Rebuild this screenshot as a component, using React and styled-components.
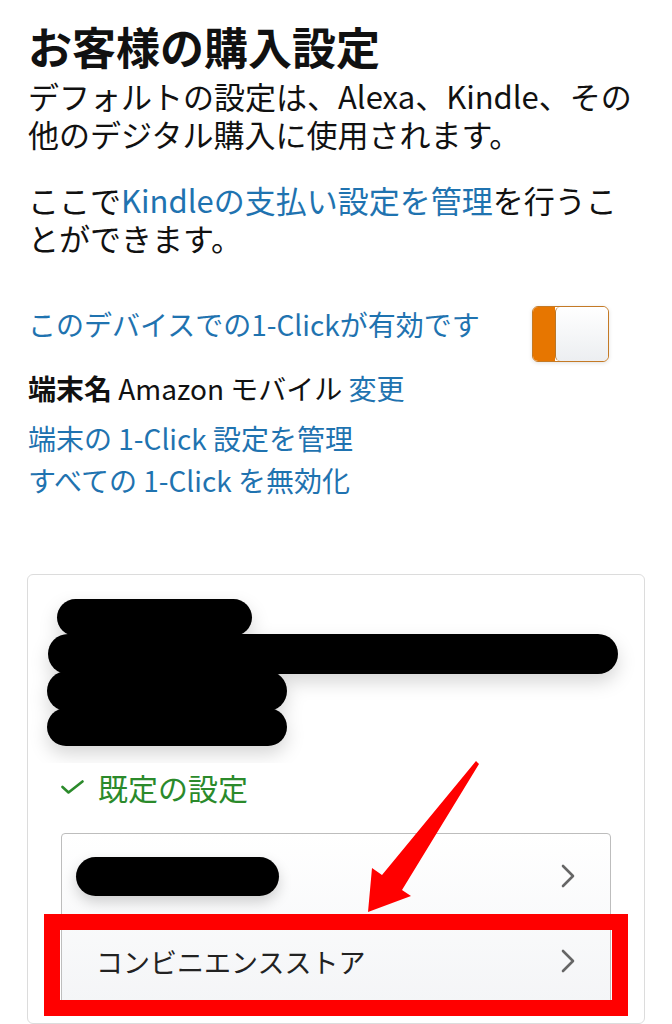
import React from "react";
import styled, { createGlobalStyle } from "styled-components";

const GlobalStyle = createGlobalStyle`
  body {
    margin: 0;
    background: #fff;
    color: #111;
    font-family: "Noto Sans CJK JP", "Noto Sans", sans-serif;
  }
`;

const Page = styled.div`
  position: relative;
  width: 672px;
  box-sizing: border-box;
  padding: 20px 28px 0;
  overflow: hidden;
`;

const Title = styled.h1`
  margin: 0;
  font-size: 44px;
  font-weight: 700;
  line-height: 52px;
`;

const Para = styled.p`
  margin: ${p => p.$gap}px 0 0;
  font-size: 31px;
  line-height: 38px;
`;

const Link = styled.span`
  color: #1f73b0;
`;

const OneClickRow = styled.div`
  display: flex;
  justify-content: space-between;
  align-items: flex-start;
  margin-top: 47px;
  padding-right: 35px;
  font-size: 28px;
  line-height: 40px;
  color: #1f73b0;
`;

const Toggle = styled.div`
  display: flex;
  width: 77px;
  height: 56px;
  margin-top: 2px;
  box-sizing: border-box;
  border: 1.5px solid #c47a26;
  border-radius: 6px;
  overflow: hidden;
  box-shadow: 0 1px 4px rgba(0, 0, 0, 0.12);
`;

const ToggleFill = styled.div`
  width: 22px;
  background: #e77600;
`;

const ToggleKnob = styled.div`
  flex: 1;
  border-left: 1.5px solid #b9772a;
  border-radius: 5px;
  background: linear-gradient(#ffffff, #eceef1);
`;

const Lines = styled.div`
  font-size: 28px;
  line-height: 42px;
`;

const DeviceLine = styled.div`
  margin: 5px 0 8px;
  & b {
    font-weight: 700;
  }
`;

const LinkLine = styled.div`
  color: #1f73b0;
`;

const Card = styled.div`
  margin: 73px -1px 0;
  padding: 16px 33px 19px;
  border: 1px solid #dcdcdc;
  border-radius: 6px;
`;

const Redacted = styled.svg`
  display: block;
  margin: 0 -33px;
`;

const DefaultLine = styled.div`
  display: flex;
  align-items: center;
  gap: 14px;
  margin-top: 4px;
  font-size: 30px;
  line-height: 40px;
  color: #2b8a2b;
`;

const PayList = styled.div`
  margin-top: 26px;
  border: 1px solid #bdbdbd;
  border-radius: 4px;
  background: linear-gradient(#ffffff, #f4f5f7);
`;

const PayRow = styled.div`
  position: relative;
  display: flex;
  align-items: center;
  justify-content: space-between;
  height: 84px;
  padding: 0 35px 0 34px;
  font-size: 27px;
  color: #222;
  & + & {
    border-top: 1px solid #d5d5d5;
  }
`;

const Blot = styled.span`
  width: ${p => p.$w}px;
  height: ${p => p.$h}px;
  margin-left: ${p => p.$shift}px;
  border-radius: ${p => p.$h / 2}px;
  background: #000;
  box-shadow: 0 6px 14px rgba(0, 0, 0, 0.18);
`;

const Highlight = styled.div`
  position: absolute;
  top: -5px;
  left: -18px;
  right: -18px;
  bottom: -13px;
  border: 16px solid #ff0000;
  pointer-events: none;
`;

const Arrow = styled.svg`
  position: absolute;
  left: 360px;
  top: 755px;
`;

const Chevron = () => (
  <svg width="14" height="24" viewBox="0 0 14 24">
    <polyline
      points="2,2 12,12 2,22"
      fill="none"
      stroke="#666"
      strokeWidth="2.6"
      strokeLinecap="round"
      strokeLinejoin="round"
    />
  </svg>
);

const Check = () => (
  <svg width="23" height="14" viewBox="0 0 23 14">
    <polyline
      points="1.5,7 7.5,12.5 21.5,1.5"
      fill="none"
      stroke="#2b8a2b"
      strokeWidth="2.6"
      strokeLinecap="round"
      strokeLinejoin="round"
    />
  </svg>
);

const blots = [
  { x: 29, y: 8, w: 195, h: 37 },
  { x: 20, y: 43, w: 570, h: 40 },
  { x: 19, y: 80, w: 240, h: 40 },
  { x: 19, y: 117, w: 240, h: 38 }
];

export default function App() {
  return (
    <>
      <GlobalStyle />
      <Page>
        <Title>お客様の購入設定</Title>
        <Para $gap={5}>
          デフォルトの設定は、Alexa、Kindle、その
          <br />
          他のデジタル購入に使用されます。
        </Para>
        <Para $gap={28}>
          ここで<Link>Kindleの支払い設定を管理</Link>を行うこ
          <br />
          とができます。
        </Para>

        <OneClickRow>
          <span>このデバイスでの1-Clickが有効です</span>
          <Toggle>
            <ToggleFill />
            <ToggleKnob />
          </Toggle>
        </OneClickRow>

        <Lines>
          <DeviceLine>
            <b>端末名</b> Amazon モバイル <Link>変更</Link>
          </DeviceLine>
          <LinkLine>端末の 1-Click 設定を管理</LinkLine>
          <LinkLine>すべての 1-Click を無効化</LinkLine>
        </Lines>

        <Card>
          <Redacted width="616" height="172" viewBox="0 0 616 172">
            <defs>
              <filter id="blur" x="-20%" y="-40%" width="140%" height="180%">
                <feDropShadow dx="0" dy="8" stdDeviation="9" floodColor="#000" floodOpacity="0.16" />
              </filter>
            </defs>
            <g filter="url(#blur)">
              {blots.map((b, i) => (
                <rect key={i} x={b.x} y={b.y} width={b.w} height={b.h} rx={b.h / 2} fill="#000" />
              ))}
            </g>
          </Redacted>

          <DefaultLine>
            <Check />
            既定の設定
          </DefaultLine>

          <PayList>
            <PayRow>
              <Blot $w={203} $h={39} $shift={-20} />
              <Chevron />
            </PayRow>
            <PayRow>
              <span>コンビニエンスストア</span>
              <Chevron />
              <Highlight />
            </PayRow>
          </PayList>
        </Card>

        <Arrow width="125" height="165" viewBox="0 0 125 165">
          <polygon
            points="116,6 119,9 42,135 51,141 8,157 12,113 22,120"
            fill="#ff0000"
          />
        </Arrow>
      </Page>
    </>
  );
}
